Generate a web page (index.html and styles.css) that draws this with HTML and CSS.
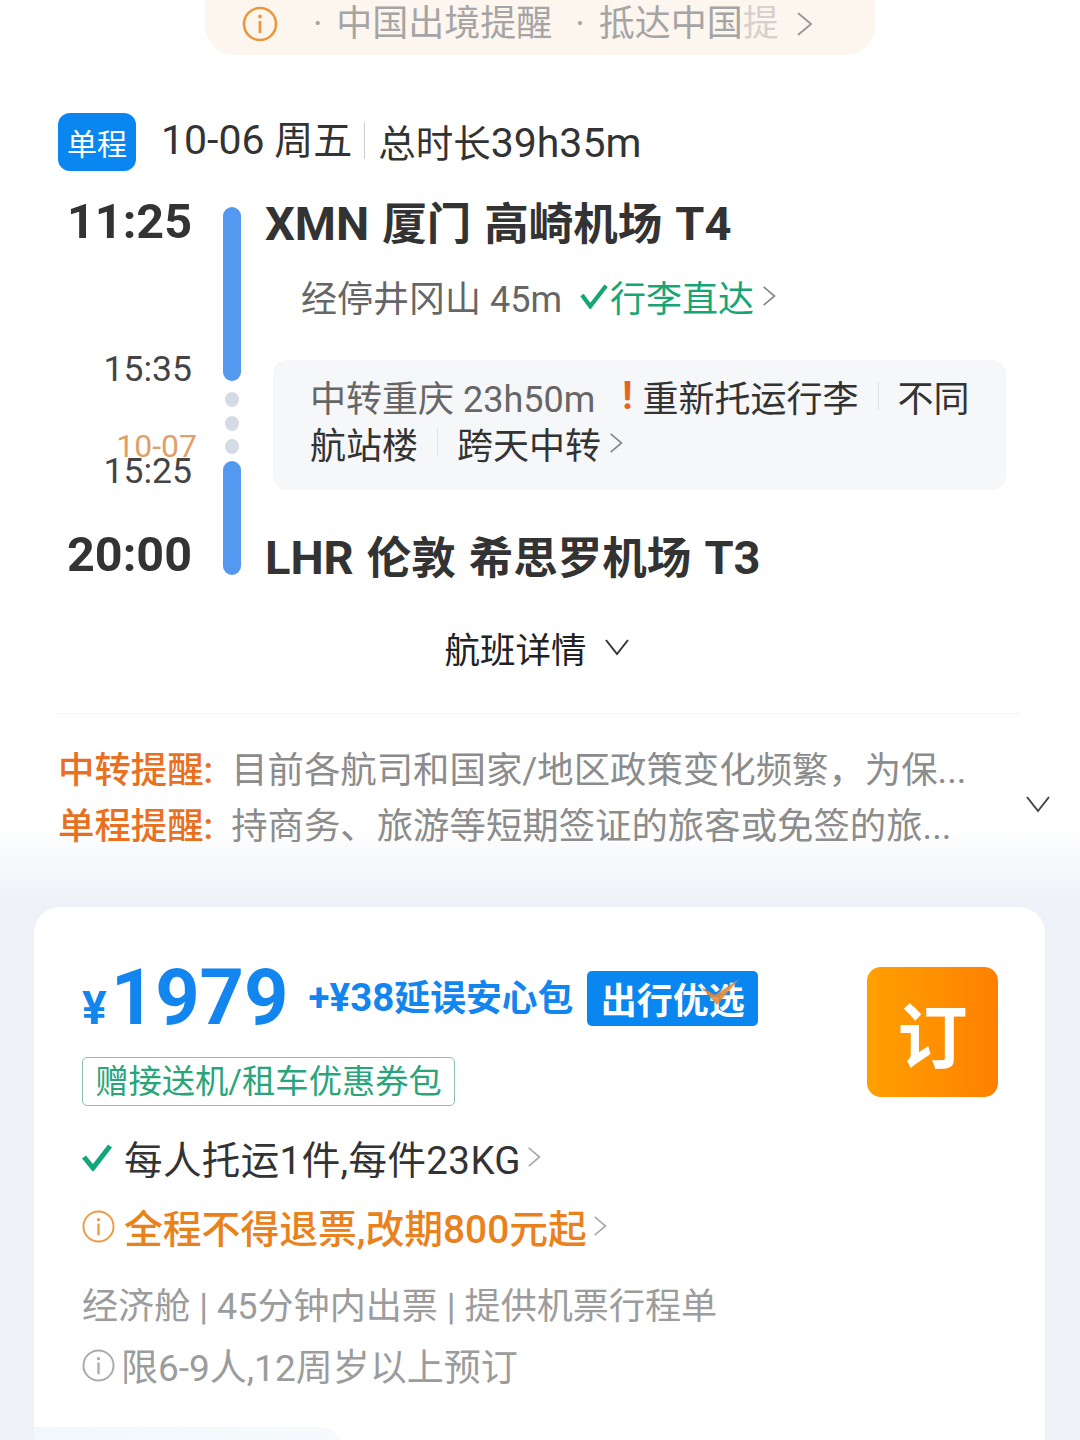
FILE: index.html
```html
<!DOCTYPE html>
<html lang="zh-CN">
<head>
    <meta charset="UTF-8">
    <meta name="viewport" content="width=device-width, initial-scale=1.0">
    <title>航班详情</title>
    <link rel="stylesheet" href="styles.css">
</head>
<body>
    <div class="page">
        <div class="notice">
            <svg class="notice-icon" viewBox="0 0 36 36"><circle cx="18" cy="18" r="16" fill="none" stroke="#e9983f" stroke-width="2.6"/><circle cx="18" cy="10.5" r="1.9" fill="#e9983f"/><path d="M18 15v12" stroke="#e9983f" stroke-width="2.8"/></svg>
            <span class="notice-text first">· 中国出境提醒</span>
            <span class="notice-text second">· 抵达中国<span class="fade">提</span></span>
            <svg class="chev-notice" viewBox="0 0 18 26"><path d="M2 2l13 11L2 24" fill="none" stroke="#999" stroke-width="2"/></svg>
        </div>

        <div class="trip-head">
            <span class="trip-badge">单程</span>
            <span class="trip-date"><span class="num">10-06</span> 周五</span>
            <span class="trip-total">总时长<span class="num">39h35m</span></span>
        </div>

        <div class="timeline">
            <div class="times">
                <div class="time-main">11:25</div>
                <div class="time-sub t-arrive">15:35</div>
                <div class="time-sub t-depart"><span class="next-day">10-07</span>15:25</div>
                <div class="time-main t-end">20:00</div>
            </div>
            <div class="rail">
                <div class="bar bar-a"></div>
                <div class="dot"></div>
                <div class="dot"></div>
                <div class="dot"></div>
                <div class="bar bar-b"></div>
            </div>
            <div class="stops">
                <div class="airport"><span class="code">XMN</span> 厦门 高崎机场 <span class="code">T4</span></div>
                <div class="stopover">
                    <span>经停井冈山 45m</span>
                    <span class="bag-ok"><svg class="tick-small" viewBox="0 0 30 28"><path d="M2 13l9 12L28 3" fill="none" stroke="#16a673" stroke-width="4.6"/></svg>行李直达</span>
                    <svg class="chev" viewBox="0 0 18 26"><path d="M2 2l13 11L2 24" fill="none" stroke="#888" stroke-width="2"/></svg>
                </div>
                <div class="transfer">
                    <div class="transfer-line">
                        <span class="transfer-city">中转重庆 23h50m</span>
                        <span class="warn">!</span>
                        <span>重新托运行李</span>
                        <span class="sep"></span>
                        <span>不同</span>
                    </div>
                    <div class="transfer-line">
                        <span>航站楼</span>
                        <span class="sep"></span>
                        <span>跨天中转</span>
                        <svg class="chev" viewBox="0 0 18 26"><path d="M2 2l13 11L2 24" fill="none" stroke="#888" stroke-width="2"/></svg>
                    </div>
                </div>
                <div class="airport airport-end"><span class="code">LHR</span> 伦敦 希思罗机场 <span class="code">T3</span></div>
            </div>
        </div>

        <div class="details-toggle">航班详情<svg class="chev-down" viewBox="0 0 26 18"><path d="M2 2l11 14L24 2" fill="none" stroke="#333" stroke-width="2"/></svg></div>

        <div class="divider"></div>

        <div class="reminders">
            <div class="reminder-list">
                <div class="reminder"><span class="reminder-label">中转提醒:</span>目前各航司和国家/地区政策变化频繁，为保...</div>
                <div class="reminder"><span class="reminder-label">单程提醒:</span>持商务、旅游等短期签证的旅客或免签的旅...</div>
            </div>
            <svg class="chev-down reminder-chev" viewBox="0 0 26 18"><path d="M2 2l11 14L24 2" fill="none" stroke="#444" stroke-width="2"/></svg>
        </div>

        <div class="card">
            <div class="card-top">
                <div class="card-main">
                    <div class="price-row">
                        <span class="price"><span class="yen">¥</span>1979</span>
                        <span class="addon"><span class="addon-num">+¥38</span>延误安心包</span>
                        <span class="pick">出行优选<svg class="pick-tick" viewBox="0 0 40 28"><path d="M1 9l14 8L39 1 17 27z" fill="#e58a3c"/></svg></span>
                    </div>
                    <div class="gift">赠接送机/租车优惠券包</div>
                </div>
                <div class="book">订</div>
            </div>
            <div class="rule rule-bag">
                <svg class="tick" viewBox="0 0 30 28"><path d="M2 14l9 11L28 3" fill="none" stroke="#12a77a" stroke-width="5"/></svg>
                <span>每人托运1件,每件23KG</span>
                <svg class="chev" viewBox="0 0 18 26"><path d="M2 2l13 11L2 24" fill="none" stroke="#aaa" stroke-width="2"/></svg>
            </div>
            <div class="rule rule-refund">
                <svg class="info" viewBox="0 0 34 34"><circle cx="17" cy="17" r="15.5" fill="none" stroke="#ec9a45" stroke-width="2"/><circle cx="17" cy="10" r="1.7" fill="#ec9a45"/><path d="M17 14v12" stroke="#ec9a45" stroke-width="2.4"/></svg>
                <span>全程不得退票,改期800元起</span>
                <svg class="chev" viewBox="0 0 18 26"><path d="M2 2l13 11L2 24" fill="none" stroke="#aaa" stroke-width="2"/></svg>
            </div>
            <div class="rule rule-grey">经济舱 | 45分钟内出票 | 提供机票行程单</div>
            <div class="rule rule-limit">
                <svg class="info info-grey" viewBox="0 0 34 34"><circle cx="17" cy="17" r="15.5" fill="none" stroke="#aaa" stroke-width="2"/><circle cx="17" cy="10" r="1.7" fill="#aaa"/><path d="M17 14v12" stroke="#aaa" stroke-width="2.4"/></svg>
                <span>限6-9人,12周岁以上预订</span>
            </div>
            <div class="card-foot"></div>
        </div>
    </div>
</body>
</html>
```

FILE: styles.css
```css
* { margin: 0; padding: 0; box-sizing: border-box; }
html, body { height: 1440px; overflow: hidden; }
body { background: #fff; font-family: Roboto, "Noto Sans CJK SC", sans-serif; color: #333; }
svg { display: block; flex: none; }
.page { height: 1440px; overflow: hidden; background: linear-gradient(to bottom, #fff 0, #fff 825px, #eef1f7 905px, #eef1f7 100%); }

/* notice pill */
.notice { display: flex; align-items: center; width: 670px; height: 55px; margin-left: 205px; padding-left: 37px; padding-bottom: 7px; background: #fdf6ee; border-radius: 0 0 30px 30px; }
.notice-icon { width: 36px; height: 36px; }
.notice-text { font-size: 36px; line-height: 45px; color: #a5a5a5; white-space: nowrap; word-spacing: 5px; }
.notice-text.first { margin-left: 35px; }
.notice-text.second { margin-left: 23px; }
.fade { opacity: 0.45; }
.chev-notice { width: 18px; height: 26px; margin-left: 17px; }

/* trip heading */
.trip-head { display: flex; align-items: center; height: 58px; margin: 58px 0 0 58px; }
.trip-badge { display: flex; align-items: center; justify-content: center; width: 78px; height: 58px; background: #0a86f0; border-radius: 12px; color: #fff; font-size: 30px; }
.trip-date { margin: 0 0 4px 25px; font-size: 39px; color: #333; padding-right: 12px; border-right: 1px solid #ccc; line-height: 36px; white-space: nowrap; }
.trip-total { margin: 0 0 3px 13px; font-size: 37.5px; color: #333; white-space: nowrap; }
.num { font-size: 41px; }

/* timeline */
.timeline { display: flex; margin: 26px 0 0 58px; }
.times { width: 134px; text-align: right; }
.time-main { font-size: 48.5px; line-height: 50px; font-weight: 700; color: #333; }
.time-sub { font-size: 35.5px; line-height: 44px; color: #444; }
.t-arrive { margin-top: 100px; }
.t-depart { position: relative; margin-top: 58px; }
.t-end { margin-top: 37px; }
.next-day { position: absolute; right: -5px; top: -18px; font-size: 32px; line-height: 30px; color: #e0a06a; }
.rail { display: flex; flex-direction: column; align-items: center; width: 18px; margin-left: 31px; padding-top: 10px; }
.bar { width: 18px; background: #5498f0; border-radius: 9px; }
.bar-a { height: 174px; margin-bottom: 11px; }
.bar-b { height: 114px; margin-top: -2px; }
.dot { width: 14px; height: 15px; margin-bottom: 8.5px; background: #d4dbe5; border-radius: 50%; }
.stops { width: 741px; margin-left: 24px; }
.airport { font-size: 44.5px; line-height: 54px; font-weight: 700; color: #333; white-space: nowrap; word-spacing: 2px; }
.code { font-size: 47px; }
.stopover { display: flex; align-items: center; height: 44px; margin: 22px 0 0 36px; font-size: 36px; color: #666; white-space: nowrap; }
.bag-ok { display: flex; align-items: center; margin-left: 18px; color: #16a673; }
.tick-small { width: 28px; height: 26px; margin-right: 2px; }
.stopover .chev { margin-left: 8px; }
.chev { width: 15px; height: 24px; margin-left: 8px; }
.transfer { width: 733px; height: 130px; margin: 42px 0 0 8px; padding: 12px 30px 0 37px; background: #f6f7f9; border-radius: 14px; font-size: 36px; color: #333; }
.transfer-line { display: flex; align-items: center; height: 47px; white-space: nowrap; }
.transfer-city { color: #666; }
.warn { margin: 0 10px 0 27px; color: #e8641b; font-size: 38px; font-weight: 700; }
.sep { width: 1px; height: 28px; margin: 0 19px; background: #e3e3e3; }
.airport-end { margin-top: 41px; }

/* details link */
.details-toggle { display: flex; align-items: center; justify-content: center; height: 44px; margin-top: 39px; padding-right: 6px; font-size: 35.5px; color: #222; }
.chev-down { width: 26px; height: 18px; margin-left: 17px; }
.divider { height: 1px; margin: 44px 60px 0 55px; background: #f4f4f4; }

/* reminders */
.reminders { display: flex; align-items: center; height: 112px; margin: 29px 0 0 58px; }
.reminder-list { width: 967px; }
.reminder { font-size: 36.4px; line-height: 56px; color: #8c8c8c; white-space: nowrap; }
.reminder-label { margin-right: 18px; color: #e8701f; font-weight: 500; }
.reminder-chev { margin: 10px 0 0 0; }

/* fare card */
.card { position: relative; width: 1011px; height: 600px; margin: 52px 0 0 34px; padding: 60px 47px 0 48px; background: #fff; border-radius: 26px; overflow: hidden; }
.card-top { display: flex; justify-content: space-between; }
.price-row { display: flex; align-items: center; height: 60px; white-space: nowrap; }
.price { padding-top: 12px; font-size: 77.5px; line-height: 60px; font-weight: 700; color: #1385ee; }
.yen { margin-right: 4px; font-size: 46px; }
.addon { margin-left: 20px; padding-bottom: 4px; font-size: 35.8px; font-weight: 700; color: #1385ee; }
.addon-num { font-size: 38.5px; }
.pick { position: relative; display: flex; align-items: center; justify-content: center; width: 171px; height: 55px; margin: 2px 0 0 14px; background: #0a86f0; border-radius: 5px; color: #fff; font-size: 36px; font-weight: 700; }
.pick-tick { position: absolute; right: 18px; top: 7px; width: 40px; height: 28px; opacity: 0.9; }
.gift { width: 373px; height: 49px; margin-top: 30px; border: 1px solid #8cc2aa; border-radius: 5px; color: #2aa57a; font-size: 33.3px; line-height: 47px; text-align: center; white-space: nowrap; }
.book { display: flex; align-items: center; justify-content: center; width: 131px; height: 130px; background: linear-gradient(to right, #ffa000, #ff8000); border-radius: 14px; color: #fff; font-size: 70px; font-weight: 700; }
.rule { display: flex; align-items: center; height: 48px; white-space: nowrap; }
.rule .chev { margin-left: 6px; }
.rule-bag { margin-top: 27px; color: #333; font-size: 38.5px; letter-spacing: 0.4px; }
.tick { width: 30px; height: 28px; margin-right: 12px; }
.rule-refund { margin-top: 21px; color: #e9811d; font-size: 38.8px; font-weight: 500; }
.info { width: 33px; height: 33px; margin-right: 9px; }
.rule-grey { margin-top: 29px; color: #9c9c9c; font-size: 36.1px; }
.rule-limit { margin-top: 14px; color: #9c9c9c; font-size: 37px; }
.info-grey { margin-right: 6px; }
.card-foot { position: absolute; left: 0; top: 520px; width: 311px; height: 80px; background: linear-gradient(to right, #f1f8fc, #f6fafd); border-radius: 0 26px 0 0; }
```
